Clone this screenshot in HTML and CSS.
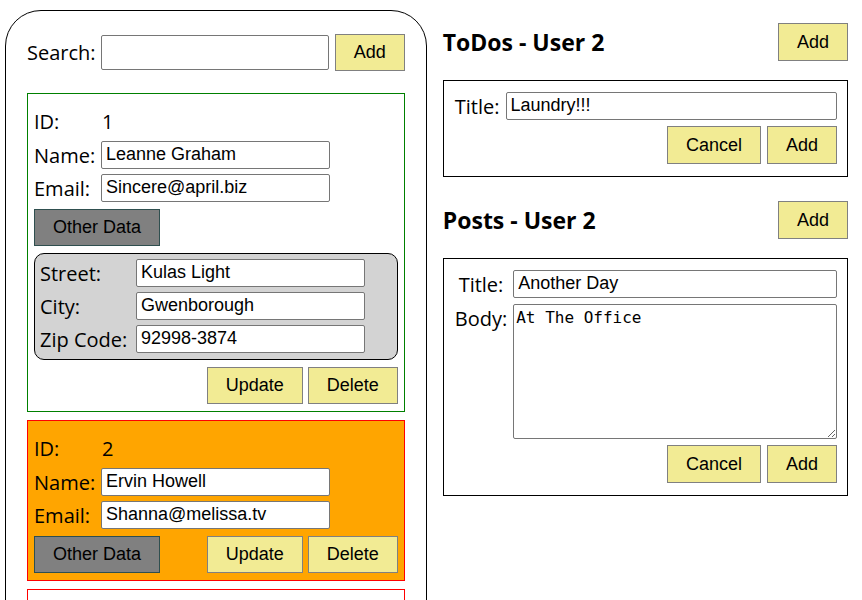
FILE: index.html
```html
<!DOCTYPE html>
<html lang="en">
<head>
<meta charset="utf-8">
<title>Users</title>
<link rel="stylesheet" href="styles.css">
</head>
<body>
<div class="app">
  <main class="users">
    <form class="search">
      <label for="search">Search:</label>
      <input id="search" type="text">
      <button class="btn" type="button">Add</button>
    </form>

    <section class="user completed">
      <div class="fields">
        <span>ID:</span><span class="id">1</span>
        <label for="name1">Name:</label><input id="name1" type="text" value="Leanne Graham">
        <label for="email1">Email:</label><input id="email1" type="text" value="Sincere@april.biz">
      </div>
      <div class="actions">
        <button class="btn other" type="button">Other Data</button>
      </div>
      <div class="address">
        <label for="street">Street:</label><input id="street" type="text" value="Kulas Light">
        <label for="city">City:</label><input id="city" type="text" value="Gwenborough">
        <label for="zip">Zip Code:</label><input id="zip" type="text" value="92998-3874">
      </div>
      <div class="actions end">
        <button class="btn" type="button">Update</button>
        <button class="btn" type="button">Delete</button>
      </div>
    </section>

    <section class="user selected">
      <div class="fields">
        <span>ID:</span><span class="id">2</span>
        <label for="name2">Name:</label><input id="name2" type="text" value="Ervin Howell">
        <label for="email2">Email:</label><input id="email2" type="text" value="Shanna@melissa.tv">
      </div>
      <div class="actions">
        <button class="btn other" type="button">Other Data</button>
        <button class="btn push" type="button">Update</button>
        <button class="btn" type="button">Delete</button>
      </div>
    </section>

    <section class="user"></section>
  </main>

  <aside class="details">
    <header class="bar">
      <h2>ToDos - User 2</h2>
      <button class="btn" type="button">Add</button>
    </header>
    <form class="card">
      <div class="entry">
        <label for="todo-title">Title:</label><input id="todo-title" type="text" value="Laundry!!!">
      </div>
      <div class="buttons">
        <button class="btn" type="button">Cancel</button>
        <button class="btn" type="button">Add</button>
      </div>
    </form>

    <header class="bar">
      <h2>Posts - User 2</h2>
      <button class="btn" type="button">Add</button>
    </header>
    <form class="card">
      <div class="entry">
        <label for="post-title">Title:</label><input id="post-title" type="text" value="Another Day">
        <label for="post-body">Body:</label><textarea id="post-body">At The Office</textarea>
      </div>
      <div class="buttons">
        <button class="btn" type="button">Cancel</button>
        <button class="btn" type="button">Add</button>
      </div>
    </form>
  </aside>
</div>
</body>
</html>
```
FILE: styles.css
```css
* {
  box-sizing: border-box;
}

html,
body {
  height: 100%;
}

body {
  margin: 0;
  overflow: hidden;
  background: #fff;
  color: #000;
  font: 20px/28px "Segoe UI", "Open Sans", sans-serif;
}

.app {
  display: grid;
  grid-template-columns: 51fr 49fr;
  gap: 16px;
  align-items: start;
  padding: 10px 14px 0 5px;
}

label {
  white-space: nowrap;
}

input,
textarea {
  width: 100%;
  min-width: 0;
  margin: 0;
  border: 1px solid #767676;
  border-radius: 2px;
  background: #fff;
  color: #000;
}

input {
  height: 28px;
  padding: 0 4px 2px;
  font: 18px "Liberation Sans", Arial, sans-serif;
}

.btn {
  height: 37px;
  padding: 0 18px;
  border: 1px solid gray;
  background: #f2eb94;
  color: #000;
  font: 18px "Liberation Sans", Arial, sans-serif;
}

.btn.other {
  border-color: darkslategray;
  background: gray;
}

.users {
  min-height: 720px;
  padding: 23px 21px;
  border: 1px solid #000;
  border-radius: 36px;
}

.search {
  display: grid;
  grid-template-columns: 68px 1fr auto;
  gap: 6px;
  align-items: center;
  margin-bottom: 22px;
}

.search input {
  height: 35px;
}

.user {
  margin-bottom: 8px;
  padding: 13px 6px 7px;
  border: 1px solid red;
}

.user.completed {
  border-color: green;
}

.user.selected {
  background: orange;
}

.user:last-child {
  min-height: 160px;
}

.fields {
  display: grid;
  grid-template-columns: 62px 63%;
  gap: 5px;
  line-height: 29px;
}

.fields .id {
  padding-left: 1px;
}

.actions {
  display: flex;
  gap: 5px;
  margin-top: 7px;
}

.actions.end {
  justify-content: flex-end;
}

.push {
  margin-left: auto;
}

.address {
  display: grid;
  grid-template-columns: 91px 65%;
  gap: 5px;
  margin-top: 7px;
  padding: 5px 5px 6px;
  border: 1px solid #000;
  border-radius: 10px;
  background: lightgray;
  line-height: 30px;
}

.fields label,
.address label {
  height: 28px;
}

.details {
  padding-top: 13px;
}

.details .btn {
  height: 38px;
}

.bar {
  display: flex;
  justify-content: space-between;
  align-items: center;
  margin-bottom: 19px;
}

.bar h2 {
  margin: 0;
  font-size: 23px;
  font-weight: 700;
}

.card {
  margin-bottom: 24px;
  padding: 11px 10px 12px 11px;
  border: 1px solid #000;
}

.entry {
  display: grid;
  grid-template-columns: auto 1fr;
  gap: 6px;
  text-align: center;
  line-height: 30px;
}

.entry label {
  height: 28px;
}

.entry textarea {
  display: block;
  height: 135px;
  padding: 3px 2px;
  font: 16px/20px "DejaVu Sans Mono", monospace;
}

.buttons {
  display: flex;
  justify-content: flex-end;
  gap: 6px;
  margin-top: 6px;
}
```
